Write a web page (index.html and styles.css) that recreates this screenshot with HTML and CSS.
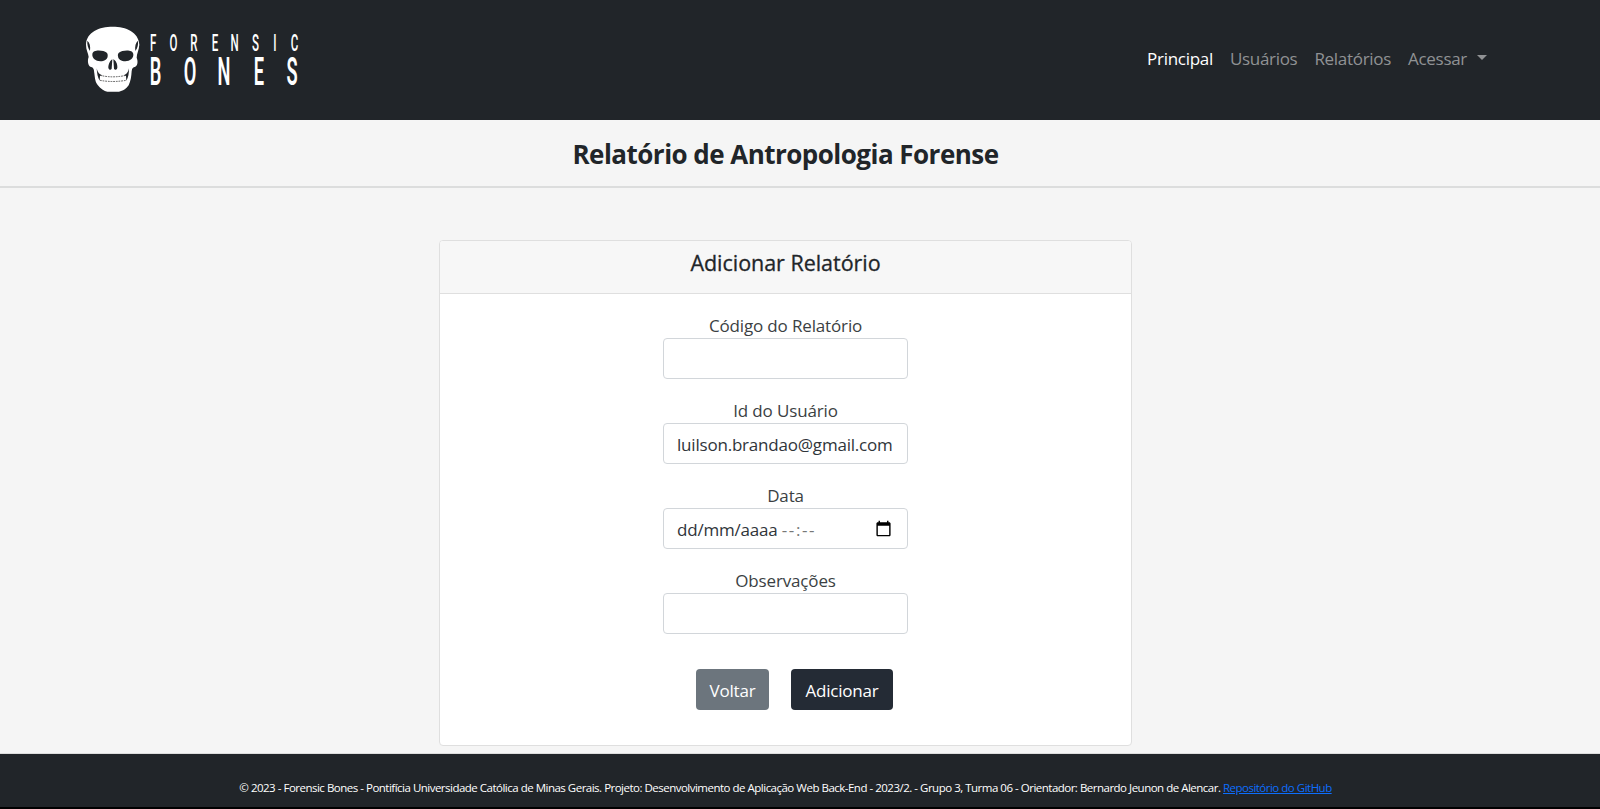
FILE: index.html
```html
<!DOCTYPE html>
<html lang="pt-BR">
<head>
<meta charset="utf-8">
<title>Adicionar Relatório - Forensic Bones</title>
<link rel="stylesheet" href="styles.css">
</head>
<body>
<header class="navbar">
  <a class="brand" aria-label="Forensic Bones">
    <svg class="logo" viewBox="42 36 648 222">
      <path class="bone" d="M128 50C88 50 49 66 48 104C48 120 55 130 56 141C52 150 53 168 63 171C72 173 72 180 73 190C75 207 76 216 83 225C91 236 103 244 112 245H147C158 244 170 235 176 226C182 214 184 200 185 184C186 174 189 171 196 170C204 166 204 152 200 143C200 130 207 120 208 104C206 66 168 50 128 50Z"/>
      <path class="hole" d="M67 133C68 120 87 120 100 123C111 126 114 131 113 139C112 149 103 154 91 154C77 154 66 145 67 133ZM190 133C189 120 170 120 157 123C146 126 143 131 144 139C145 149 154 154 166 154C180 154 191 145 190 133Z"/>
      <path class="hole" d="M127 148C121 151 115 162 115 173C117 181 123 180 125 176ZM130 148C137 151 143 162 142 173C140 181 134 180 132 176ZM80 175C83 189 89 194 98 196L90 198L89 212C83 203 81 190 80 175ZM177 175C174 189 168 194 160 196L168 198L169 212C175 203 177 190 177 175ZM52 92C59 98 62 108 60 123C54 114 51 104 52 92ZM204 92C197 98 194 108 196 123C203 114 205 104 204 92Z"/>
      <path class="teeth" d="M90 196Q128 205 168 196M90 211Q128 218 168 211"/>
      <g class="word-small" transform="scale(.48 1)"><text y="122" x="520 647 775 906 1028 1159 1280 1403">FORENSIC</text></g>
      <g class="word-large" transform="scale(.46 1)"><text y="224" x="558 783 1004 1232 1448">BONES</text></g>
    </svg>
  </a>
  <nav class="menu">
    <a class="active">Principal</a><a>Usuários</a><a>Relatórios</a><a class="dropdown">Acessar</a>
  </nav>
</header>
<div class="title-bar"><h1>Relatório de Antropologia Forense</h1></div>
<main class="content">
  <section class="card">
    <div class="card-header"><h2>Adicionar Relatório</h2></div>
    <form class="form">
      <div class="field"><label>Código do Relatório</label><div class="input"></div></div>
      <div class="field"><label>Id do Usuário</label><div class="input"><span class="email">luilson.brandao@gmail.com</span></div></div>
      <div class="field"><label>Data</label><div class="input date"><span>dd/mm/aaaa <span class="time">--:--</span></span>
        <svg class="calendar" viewBox="0 0 24 24"><path d="M20 3h-1V1h-2v2H7V1H5v2H4c-1.100 0-2 .9-2 2v16c0 1.100.9 2 2 2h16c1.100 0 2-.9 2-2V5c0-1.100-.9-2-2-2zm0 18H4V8h16v13z"/></svg></div></div>
      <div class="field"><label>Observações</label><div class="input"></div></div>
      <div class="actions"><button type="button" class="btn back">Voltar</button><button type="button" class="btn add">Adicionar</button></div>
    </form>
  </section>
</main>
<footer class="footer"><p>© 2023 - Forensic Bones - Pontifícia Universidade Católica de Minas Gerais. Projeto: Desenvolvimento de Aplicação Web Back-End - 2023/2. - Grupo 3, Turma 06 - Orientador: Bernardo Jeunon de Alencar. <a>Repositório do GitHub</a></p></footer>
</body>
</html>
```
FILE: styles.css
```css
* { box-sizing: border-box; }
body { margin: 0; height: 809px; display: flex; flex-direction: column; background: #f5f5f5; color: #212529; font: 17px/26px "Open Sans", "Noto Sans", sans-serif; letter-spacing: -.3px; overflow: hidden; }
h1, h2, p { margin: 0; }
.navbar { height: 120px; flex: none; background: #212529; display: flex; justify-content: space-between; align-items: center; padding: 0 113px 3px 84px; }
.brand { display: flex; }
.logo { width: 216px; height: 74px; display: block; overflow: visible; }
.bone { fill: #fff; }
.hole { fill: #212529; }
.teeth { fill: none; stroke: #555; stroke-width: 3; stroke-dasharray: 5 3; }
.word-small, .word-large { fill: #fff; font-family: Roboto, sans-serif; text-anchor: middle; letter-spacing: 0; }
.word-small { font-size: 72px; font-weight: 500; }
.word-large { font-size: 119px; font-weight: 600; }
.menu { display: flex; gap: 17px; color: #909294; }
.active { color: #fff; }
.dropdown { display: flex; align-items: center; gap: 10px; }
.dropdown::after { content: ""; border: 5px solid transparent; border-top-color: currentColor; border-bottom: 0; margin-top: -2px; }
.title-bar { height: 68px; flex: none; border-bottom: 2px solid #dcdddd; padding: 16px 29px 0 0; text-align: center; }
h1 { font-size: 26px; line-height: 36px; font-weight: 700; letter-spacing: -.53px; }
.content { flex: 1; padding: 52px 29px 0 0; display: flex; justify-content: center; align-items: flex-start; }
.card { width: 693px; height: 506px; background: #fff; border: 1px solid #dfdfdf; border-radius: 4px; }
.card-header { height: 53px; background: #f7f7f7; border-bottom: 1px solid #dfdfdf; border-radius: 3px 3px 0 0; text-align: center; padding-top: 8px; }
h2 { font-size: 21.500px; line-height: 28px; font-weight: 500; letter-spacing: -.03px; -webkit-text-stroke: .3px currentColor; }
.form { display: flex; flex-direction: column; align-items: center; padding-top: 18px; }
.field { width: 245px; height: 85px; text-align: center; }
label { display: block; height: 26px; padding-top: 1px; color: #3b3f43; letter-spacing: -.15px; }
.input { height: 41px; border: 1px solid #d2d6da; border-radius: 4px; padding: 2px 15px 0 13px; display: flex; align-items: center; color: #30353a; letter-spacing: -.2px; white-space: nowrap; }
.date { justify-content: space-between; }
.time { color: #777; letter-spacing: 1.600px; }
.calendar { width: 17px; height: 17px; fill: #000; margin-top: -2px; }
.actions { display: flex; gap: 22px; margin: 17px 0 0 18px; }
.btn { height: 41px; border: 0; border-radius: 4px; color: #fff; font: inherit; letter-spacing: -.22px; padding: 2px 0 0; }
.back { width: 73px; background: #6c757d; }
.add { width: 102px; background: #242b35; }
.footer { height: 56px; flex: none; background: #212529; border-top: 1px solid #ddd; border-bottom: 2px solid #000; padding: 22px 29px 0 0; text-align: center; color: #fff; font-size: 11.500px; line-height: 24px; letter-spacing: -.515px; word-spacing: .1px; white-space: nowrap; }
.footer a { color: #0d6efd; text-decoration: underline; }
```
